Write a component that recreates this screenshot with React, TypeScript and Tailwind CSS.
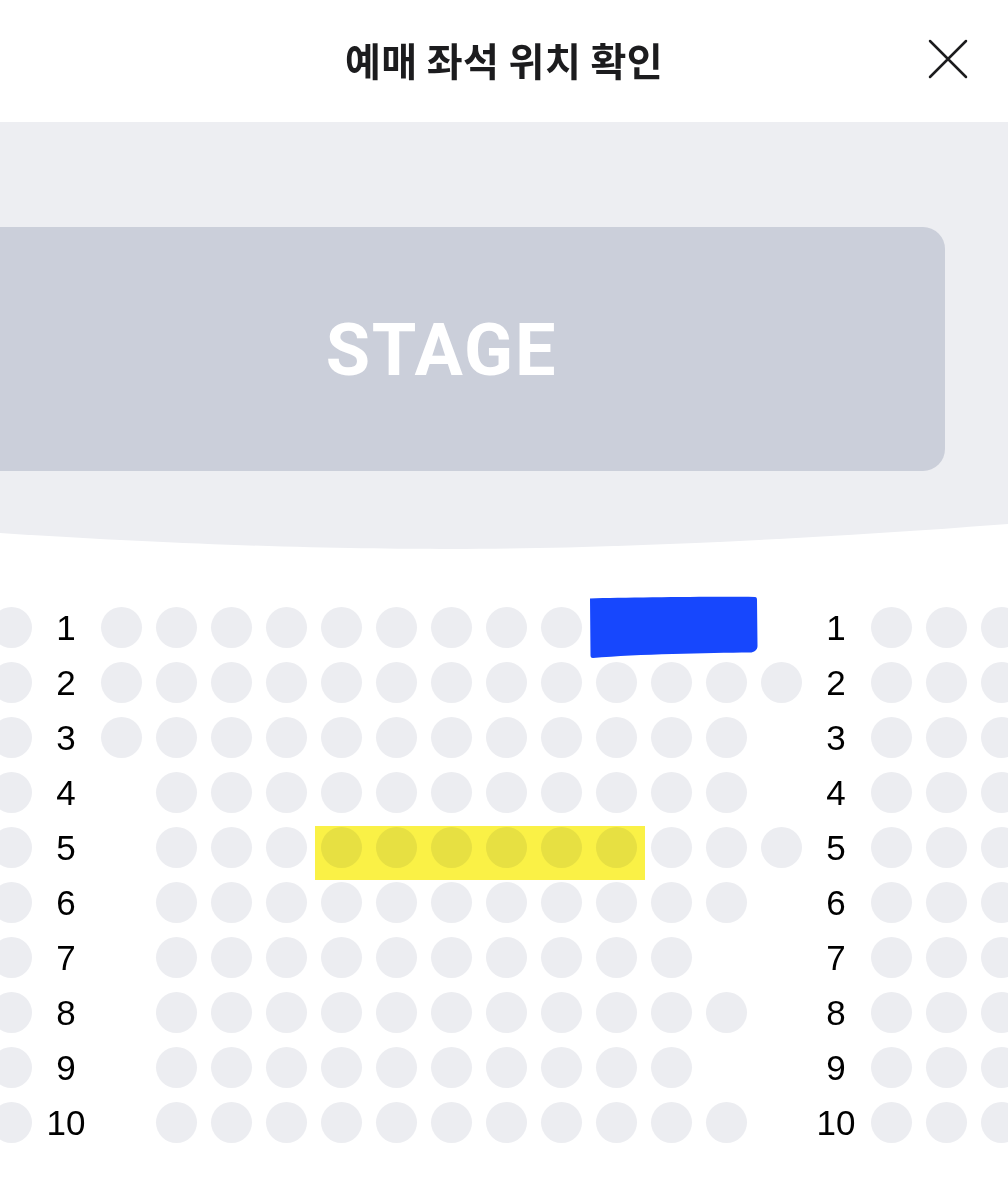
import React from "react";

// seat columns 2..14 sit between the two row labels; [from, to] inclusive
const rows: { n: number; from: number; to: number }[] = [
  { n: 1, from: 2, to: 13 },
  { n: 2, from: 2, to: 14 },
  { n: 3, from: 2, to: 13 },
  { n: 4, from: 3, to: 13 },
  { n: 5, from: 3, to: 14 },
  { n: 6, from: 3, to: 13 },
  { n: 7, from: 3, to: 12 },
  { n: 8, from: 3, to: 13 },
  { n: 9, from: 3, to: 12 },
  { n: 10, from: 3, to: 13 },
];

function Seat({ on = true }: { on?: boolean }) {
  return (
    <div className="w-[55px] h-[55px] flex-shrink-0 flex items-center justify-center">
      {on && <div className="w-[41px] h-[41px] rounded-full bg-[#ecedf1]" />}
    </div>
  );
}

function Label({ n }: { n: number }) {
  return (
    <div className="w-[55px] h-[55px] flex-shrink-0 flex items-center justify-center text-[35px] leading-none text-black font-['Liberation_Sans',Arial,sans-serif]">
      {n}
    </div>
  );
}

function CloseIcon() {
  return (
    <svg width="40" height="40" viewBox="0 0 40 40" fill="none">
      <path d="M2 2L38 38M38 2L2 38" stroke="#1c1c1e" strokeWidth="2.5" strokeLinecap="round" />
    </svg>
  );
}

export default function App() {
  const seatCols = Array.from({ length: 13 }, (_, i) => i + 2);

  return (
    <div className="w-[1008px] h-[1200px] bg-white overflow-hidden font-['Noto_Sans_CJK_KR',sans-serif]">
      {/* Header */}
      <div className="relative h-[122px] flex items-center justify-center">
        <h1 className="text-[39px] font-bold text-[#1c1c1e] leading-none -mt-[3px] tracking-[0.01em]">
          예매 좌석 위치 확인
        </h1>
        <button className="absolute right-[40px] top-[39px]">
          <CloseIcon />
        </button>
      </div>

      {/* Stage area */}
      <div className="bg-[#edeef2] h-[402px] pt-[105px]">
        <div className="w-[945px] h-[244px] bg-[#cbcfda] rounded-r-[22px] flex items-center justify-center">
          <span className="text-white text-[72px] font-bold leading-none font-['Roboto',Arial,sans-serif] ml-[-62px] mt-[4px] tracking-[0.025em]">
            STAGE
          </span>
        </div>
      </div>
      <svg width="1008" height="26" viewBox="0 0 1008 26" className="block">
        <path d="M0 0H1008V0C800 16 600 25 450 25C350 25 200 22 0 9Z" fill="#edeef2" />
      </svg>

      {/* Seats */}
      <div className="relative mt-[49.5px]">
        <div className="flex flex-col -ml-[16.5px]">
          {rows.map((r) => (
            <div key={r.n} className="flex">
              <Seat />
              <Label n={r.n} />
              {seatCols.map((c) => (
                <Seat key={c} on={c >= r.from && c <= r.to} />
              ))}
              <Label n={r.n} />
              <Seat />
              <Seat />
              <Seat />
            </div>
          ))}
        </div>

        {/* blue marker over row 1 */}
        <svg
          className="absolute left-[588px] top-[-4px]"
          width="172"
          height="64"
          viewBox="0 0 172 64"
        >
          <path
            d="M2 2.5C40 1.5 120 0.5 167 1C168.5 1 169 2 169 4L169.5 50C169.5 54 166 56.5 162 56.5C120 57 50 58 5 62C3 62 2.5 61 2.5 59Z"
            fill="#1747fd"
          />
        </svg>

        {/* yellow highlight over row 5 */}
        <div className="absolute left-[315px] top-[226.5px] w-[330px] h-[54px] bg-[#faf146] mix-blend-multiply" />
      </div>
    </div>
  );
}
